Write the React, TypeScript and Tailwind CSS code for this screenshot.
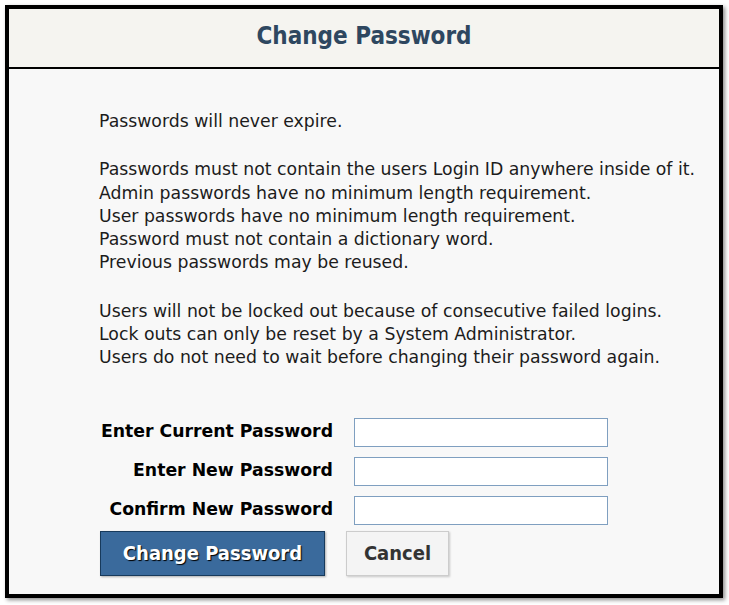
import React from "react";

const rules = [
  ["Passwords will never expire."],
  [
    "Passwords must not contain the users Login ID anywhere inside of it.",
    "Admin passwords have no minimum length requirement.",
    "User passwords have no minimum length requirement.",
    "Password must not contain a dictionary word.",
    "Previous passwords may be reused.",
  ],
  [
    "Users will not be locked out because of consecutive failed logins.",
    "Lock outs can only be reset by a System Administrator.",
    "Users do not need to wait before changing their password again.",
  ],
];

const fields = ["Enter Current Password", "Enter New Password", "Confirm New Password"];

export default function App() {
  return (
    <div className="w-[729px] h-[605px] bg-white pt-[5px] pl-[5px]">
      <div className="w-[718px] h-[593px] border-4 border-black bg-[#f8f8f8] shadow-[2px_2px_4px_rgba(0,0,0,0.45)] flex flex-col">
        {/* Header */}
        <div className="h-[60px] pb-[4px] bg-[#f5f4f0] border-b-2 border-black flex items-center justify-center">
          <h1 className="text-[24px] font-bold text-[#2e4760] [font-family:'DejaVu_Sans_Condensed',sans-serif]">
            Change Password
          </h1>
        </div>
        {/* Body */}
        <div className="pl-[90px] pt-[41px] text-[17.3px] leading-[23.3px] text-[#1c1c1c] [font-family:'DejaVu_Sans',sans-serif]">
          {rules.map((group, i) => (
            <div key={i} className="mb-[25px]">
              {group.map((line) => (
                <p key={line}>{line}</p>
              ))}
            </div>
          ))}
        </div>
        <div className="pl-[91px] pt-[23px] flex flex-col gap-[10px]">
          {fields.map((f) => (
            <div key={f} className="flex items-center">
              <label className="w-[233px] text-right text-[17.3px] font-bold text-black [font-family:'DejaVu_Sans',sans-serif]">
                {f}
              </label>
              <input
                type="password"
                className="ml-[21px] w-[254px] h-[29px] bg-white border border-[#7f9fc0] outline-none"
              />
            </div>
          ))}
        </div>
        <div className="pl-[91px] pt-[6px] flex gap-[21px] [font-family:'DejaVu_Sans_Condensed',sans-serif]">
          <button className="w-[225px] h-[45px] bg-[#3a6a9c] border border-[#173a5c] text-white text-[20px] font-bold [text-shadow:1px_1px_1px_#000] shadow-[1px_1px_2px_rgba(0,0,0,0.3)]">
            Change Password
          </button>
          <button className="w-[103px] h-[45px] bg-[#f4f4f4] border border-[#cccccc] text-[#333] text-[20px] font-bold shadow-[1px_1px_2px_rgba(0,0,0,0.2)]">
            Cancel
          </button>
        </div>
      </div>
    </div>
  );
}
